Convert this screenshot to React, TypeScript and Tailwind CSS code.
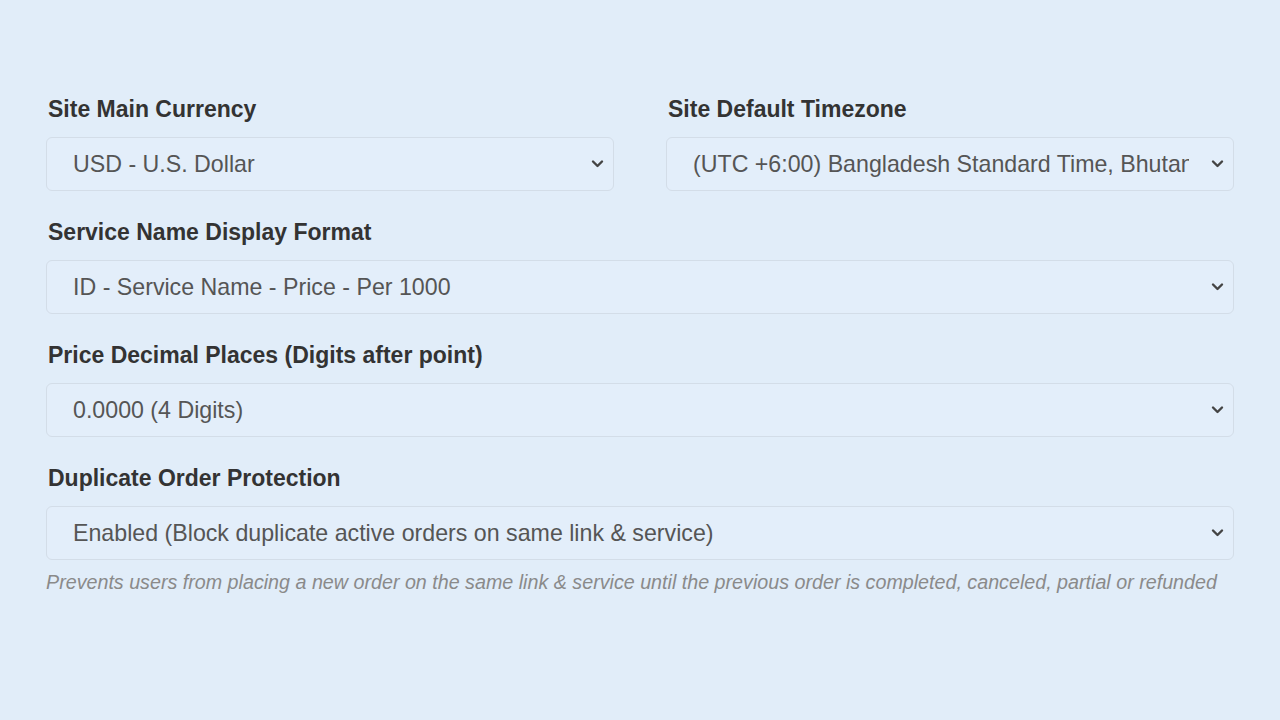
import React from "react";

type Opt = { value: string; label: string };

function Chevron() {
  return (
    <svg
      className="pointer-events-none absolute right-[10px] top-1/2 -translate-y-1/2 text-[#444]"
      width="13"
      height="9"
      viewBox="0 0 13 9"
      fill="none"
    >
      <path d="M2 2l4.5 4.5L11 2" stroke="currentColor" strokeWidth="2.4" strokeLinecap="round" strokeLinejoin="round" />
    </svg>
  );
}

function Field({
  label,
  options,
  help,
}: {
  label: string;
  options: Opt[];
  help?: string;
}) {
  return (
    <div className="flex flex-col">
      <label className="mb-[14px] pl-[2px] text-[23px] font-bold leading-[28px] text-[#333]">
        {label}
      </label>
      <div className="relative">
        <select
          defaultValue={options[0].value}
          className="h-[54px] w-full appearance-none rounded-[6px] border border-[#d3dde8] bg-[#e3eefa] pl-[26px] pr-[44px] text-[23.2px] text-[#555] outline-none"
        >
          {options.map((o) => (
            <option key={o.value} value={o.value}>
              {o.label}
            </option>
          ))}
        </select>
        <Chevron />
      </div>
      {help ? (
        <p className="mt-[10px] whitespace-nowrap text-[19.7px] leading-[24px] italic text-[#8a8a8a]">{help}</p>
      ) : null}
    </div>
  );
}

export default function App() {
  return (
    <div
      className="min-h-screen w-full bg-[#e1edf9] px-[46px] pt-[95px]"
      style={{ fontFamily: '"Liberation Sans", Arial, sans-serif' }}
    >
      <div className="flex flex-col gap-[27px]">
        <div className="grid grid-cols-2 gap-[52px]">
          <Field label="Site Main Currency" options={[{ value: "USD", label: "USD - U.S. Dollar" }]} />
          <Field
            label="Site Default Timezone"
            options={[{ value: "+6", label: "(UTC +6:00) Bangladesh Standard Time, Bhutan Time, Omsk Time" }]}
          />
        </div>
        <Field
          label="Service Name Display Format"
          options={[{ value: "f1", label: "ID - Service Name - Price - Per 1000" }]}
        />
        <Field label="Price Decimal Places (Digits after point)" options={[{ value: "4", label: "0.0000 (4 Digits)" }]} />
        <Field
          label="Duplicate Order Protection"
          options={[{ value: "on", label: "Enabled (Block duplicate active orders on same link & service)" }]}
          help="Prevents users from placing a new order on the same link & service until the previous order is completed, canceled, partial or refunded"
        />
      </div>
    </div>
  );
}
